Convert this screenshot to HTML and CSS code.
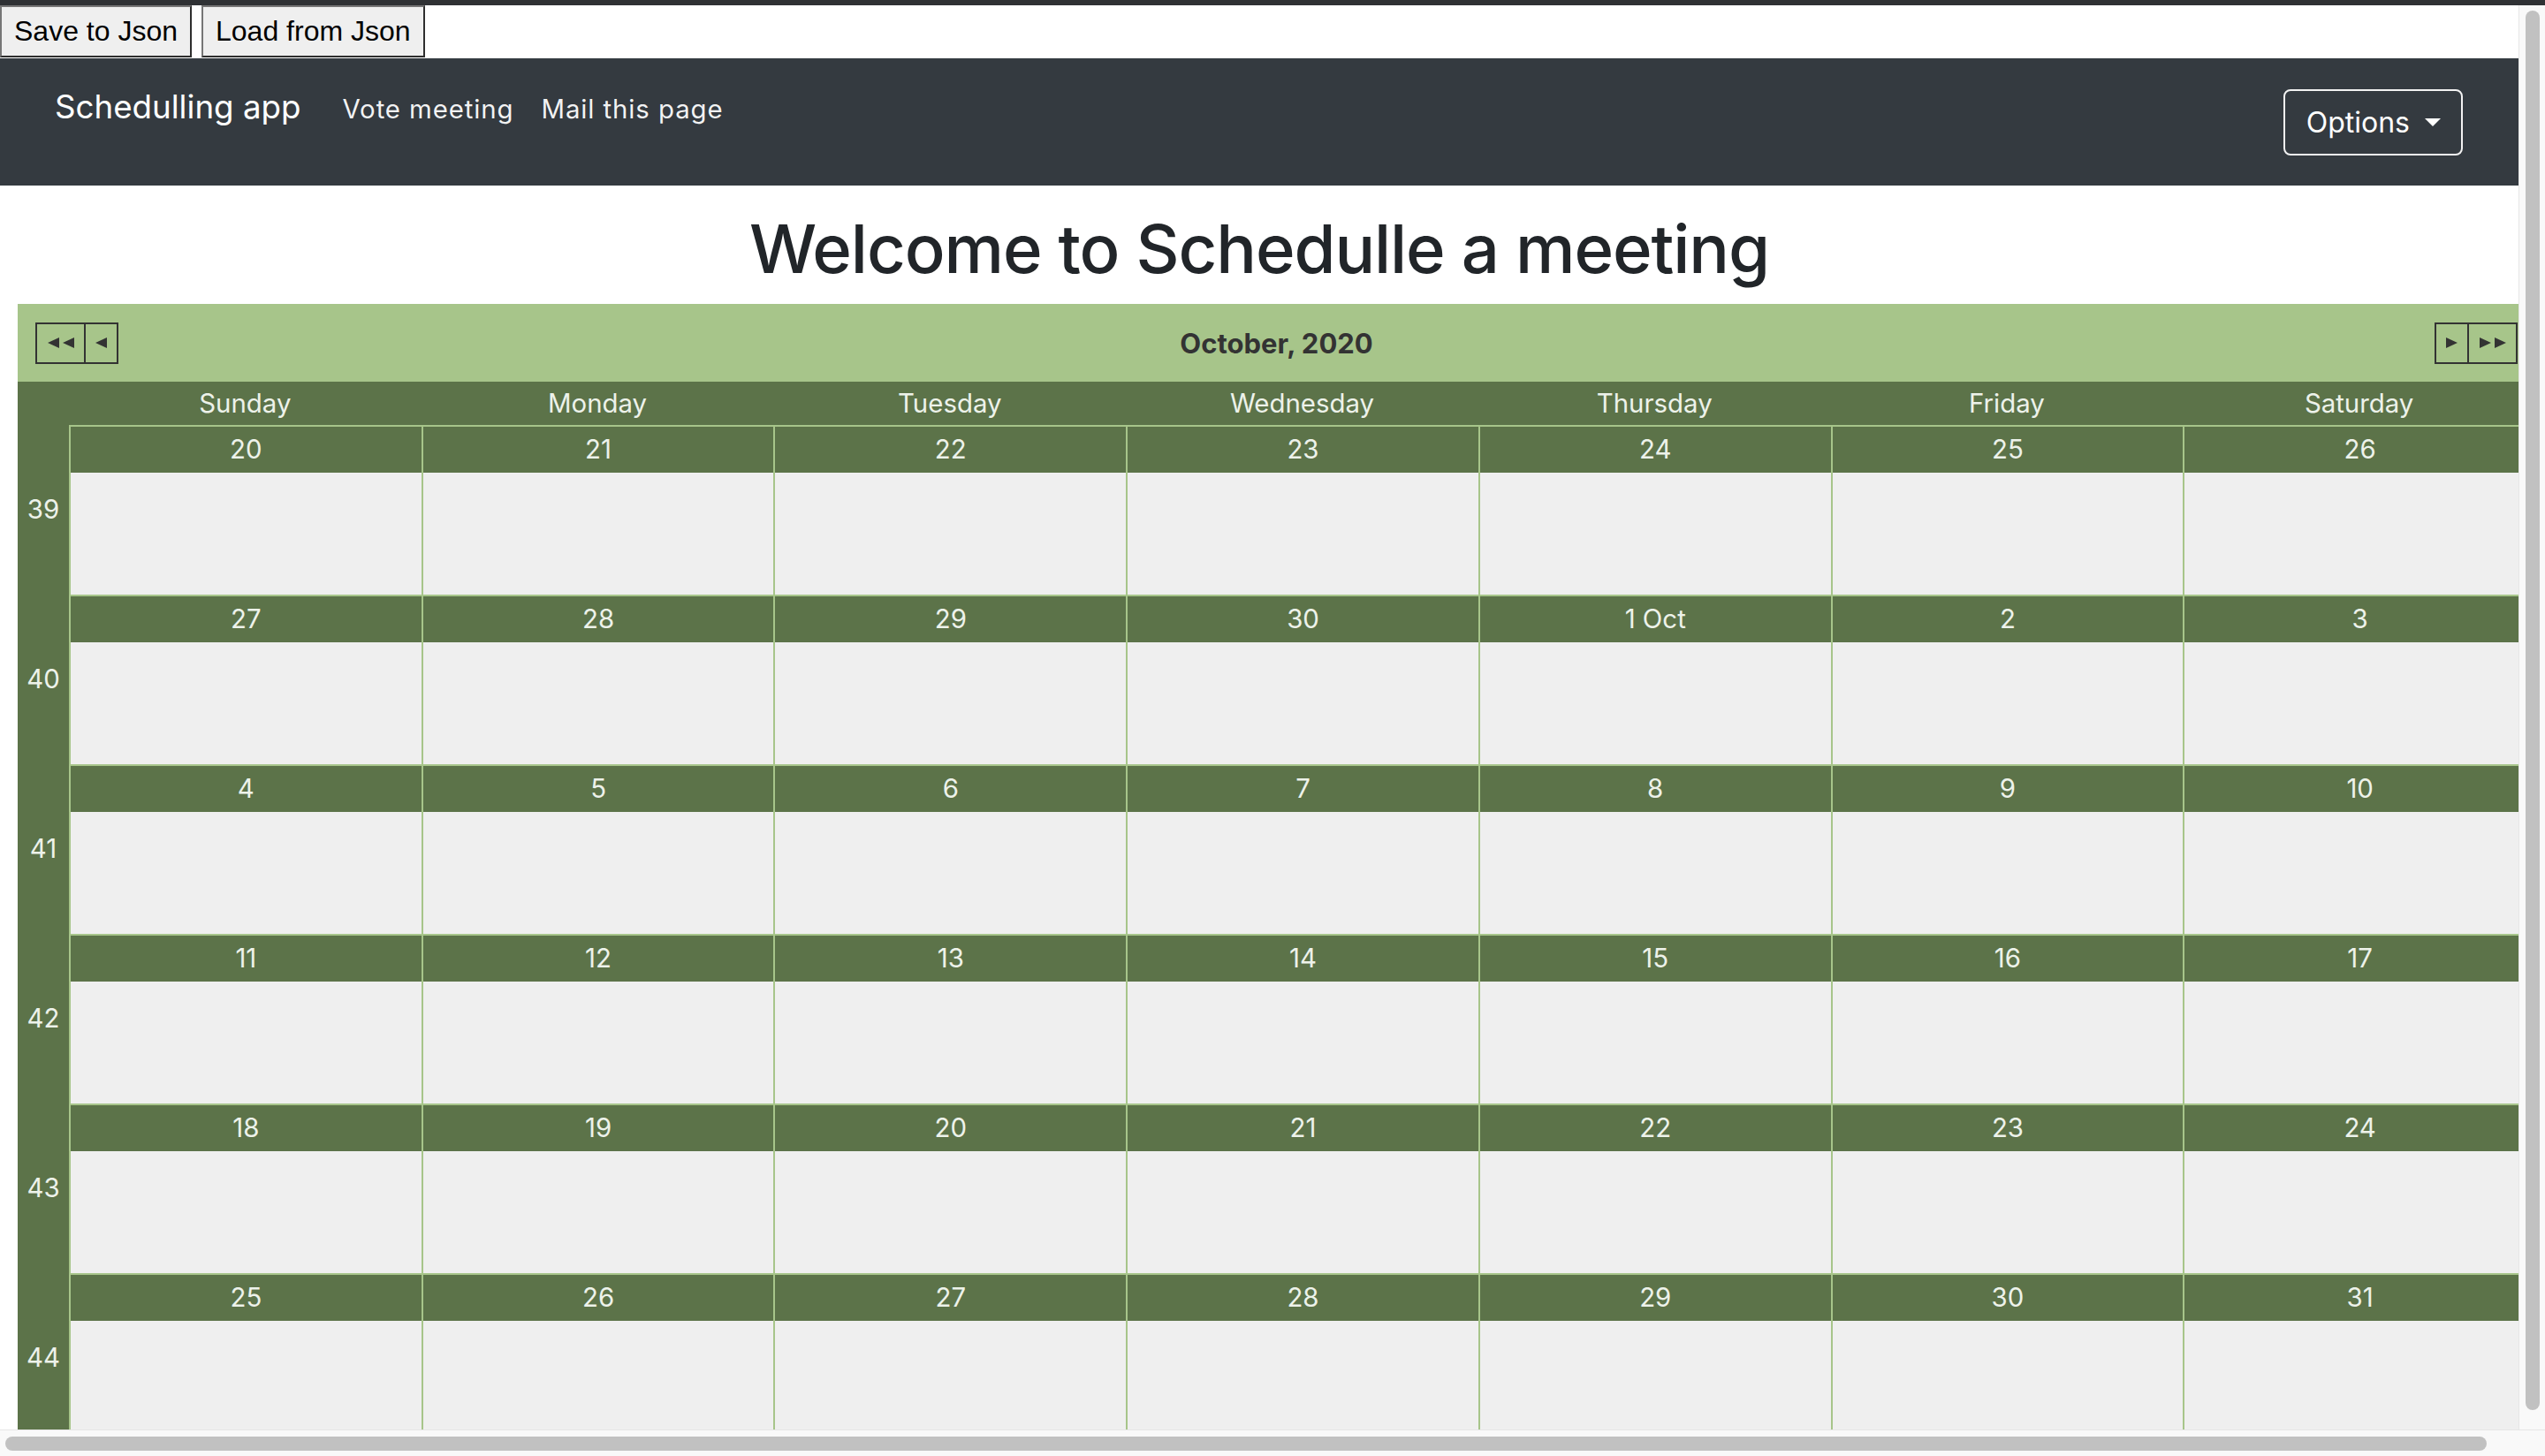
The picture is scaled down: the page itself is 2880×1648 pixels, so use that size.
FILE: index.html
```html
<!DOCTYPE html>
<html lang="en">
<head>
<meta charset="utf-8">
<title>Schedulling app</title>
<link rel="stylesheet" href="styles.css">
</head>
<body>
<div class="chrome"></div>
<div class="window">
  <div class="viewport">
    <div class="page">
      <div class="toolbar">
        <button class="file-btn">Save to Json</button>
        <button class="file-btn">Load from Json</button>
      </div>
      <nav class="navbar">
        <div class="nav-left">
          <a class="brand">Schedulling app</a>
          <div class="nav-links">
            <a class="nav-link">Vote meeting</a>
            <a class="nav-link">Mail this page</a>
          </div>
        </div>
        <button class="options-btn">Options<span class="caret"></span></button>
      </nav>
      <h1 class="page-title">Welcome to Schedulle a meeting</h1>
      <div class="cal">
        <div class="cal-head">
          <div class="navgroup">
            <span class="navbtn wide"><svg width="30" height="12" viewBox="0 0 30 12"><polygon points="0,6 13,0 13,12"/><polygon points="17,6 30,0 30,12"/></svg></span>
            <span class="navbtn narrow"><svg width="13" height="12" viewBox="0 0 13 12"><polygon points="0,6 13,0 13,12"/></svg></span>
          </div>
          <div class="cal-title">October, 2020</div>
          <div class="navgroup right">
            <span class="navbtn narrow"><svg width="13" height="12" viewBox="0 0 13 12"><polygon points="13,6 0,0 0,12"/></svg></span>
            <span class="navbtn wide"><svg width="30" height="12" viewBox="0 0 30 12"><polygon points="13,6 0,0 0,12"/><polygon points="30,6 17,0 17,12"/></svg></span>
          </div>
        </div>
        <div class="days-head">
          <span></span><span>Sunday</span><span>Monday</span><span>Tuesday</span><span>Wednesday</span><span>Thursday</span><span>Friday</span><span>Saturday</span>
        </div>
        <div class="week">
          <div class="wk">39</div>
          <div class="wdays">
            <div class="day"><div class="day-num">20</div><div class="day-body"></div></div>
            <div class="day"><div class="day-num">21</div><div class="day-body"></div></div>
            <div class="day"><div class="day-num">22</div><div class="day-body"></div></div>
            <div class="day"><div class="day-num">23</div><div class="day-body"></div></div>
            <div class="day"><div class="day-num">24</div><div class="day-body"></div></div>
            <div class="day"><div class="day-num">25</div><div class="day-body"></div></div>
            <div class="day"><div class="day-num">26</div><div class="day-body"></div></div>
          </div>
        </div>
        <div class="week">
          <div class="wk">40</div>
          <div class="wdays">
            <div class="day"><div class="day-num">27</div><div class="day-body"></div></div>
            <div class="day"><div class="day-num">28</div><div class="day-body"></div></div>
            <div class="day"><div class="day-num">29</div><div class="day-body"></div></div>
            <div class="day"><div class="day-num">30</div><div class="day-body"></div></div>
            <div class="day"><div class="day-num">1 Oct</div><div class="day-body"></div></div>
            <div class="day"><div class="day-num">2</div><div class="day-body"></div></div>
            <div class="day"><div class="day-num">3</div><div class="day-body"></div></div>
          </div>
        </div>
        <div class="week">
          <div class="wk">41</div>
          <div class="wdays">
            <div class="day"><div class="day-num">4</div><div class="day-body"></div></div>
            <div class="day"><div class="day-num">5</div><div class="day-body"></div></div>
            <div class="day"><div class="day-num">6</div><div class="day-body"></div></div>
            <div class="day"><div class="day-num">7</div><div class="day-body"></div></div>
            <div class="day"><div class="day-num">8</div><div class="day-body"></div></div>
            <div class="day"><div class="day-num">9</div><div class="day-body"></div></div>
            <div class="day"><div class="day-num">10</div><div class="day-body"></div></div>
          </div>
        </div>
        <div class="week">
          <div class="wk">42</div>
          <div class="wdays">
            <div class="day"><div class="day-num">11</div><div class="day-body"></div></div>
            <div class="day"><div class="day-num">12</div><div class="day-body"></div></div>
            <div class="day"><div class="day-num">13</div><div class="day-body"></div></div>
            <div class="day"><div class="day-num">14</div><div class="day-body"></div></div>
            <div class="day"><div class="day-num">15</div><div class="day-body"></div></div>
            <div class="day"><div class="day-num">16</div><div class="day-body"></div></div>
            <div class="day"><div class="day-num">17</div><div class="day-body"></div></div>
          </div>
        </div>
        <div class="week">
          <div class="wk">43</div>
          <div class="wdays">
            <div class="day"><div class="day-num">18</div><div class="day-body"></div></div>
            <div class="day"><div class="day-num">19</div><div class="day-body"></div></div>
            <div class="day"><div class="day-num">20</div><div class="day-body"></div></div>
            <div class="day"><div class="day-num">21</div><div class="day-body"></div></div>
            <div class="day"><div class="day-num">22</div><div class="day-body"></div></div>
            <div class="day"><div class="day-num">23</div><div class="day-body"></div></div>
            <div class="day"><div class="day-num">24</div><div class="day-body"></div></div>
          </div>
        </div>
        <div class="week">
          <div class="wk">44</div>
          <div class="wdays">
            <div class="day"><div class="day-num">25</div><div class="day-body"></div></div>
            <div class="day"><div class="day-num">26</div><div class="day-body"></div></div>
            <div class="day"><div class="day-num">27</div><div class="day-body"></div></div>
            <div class="day"><div class="day-num">28</div><div class="day-body"></div></div>
            <div class="day"><div class="day-num">29</div><div class="day-body"></div></div>
            <div class="day"><div class="day-num">30</div><div class="day-body"></div></div>
            <div class="day"><div class="day-num">31</div><div class="day-body"></div></div>
          </div>
        </div>
      </div>
    </div>
  </div>
  <div class="vscroll"><div class="vthumb"></div></div>
  <div class="hscroll"><div class="hthumb"></div></div>
</div>
</body>
</html>
```
FILE: styles.css
```css
html, body {
  margin: 0;
  padding: 0;
  height: 100%;
}
body {
  display: flex;
  flex-direction: column;
  overflow: hidden;
  font-family: Inter, "Noto Sans", sans-serif;
  background: #ffffff;
  color: #212529;
}
.chrome {
  height: 6px;
  flex: none;
  background: #2f3134;
}
.window {
  flex: 1;
  min-height: 0;
  display: grid;
  grid-template-columns: 1fr 30px;
  grid-template-rows: 1fr 30px;
}
.viewport {
  overflow: hidden;
  min-width: 0;
  min-height: 0;
  background: #ffffff;
}
.page {
  width: 100%;
}

/* file buttons */
.toolbar {
  display: flex;
  gap: 11px;
  height: 60px;
}
.file-btn {
  height: 59px;
  margin: 0;
  padding: 0 14px;
  font-family: "Liberation Sans", Arial, sans-serif;
  font-size: 32px;
  color: #000;
  background: #efefef;
  border-style: solid;
  border-width: 2px;
  border-color: #767676 #2e2e2e #2e2e2e #767676;
  border-radius: 0;
}

/* navbar */
.navbar {
  height: 144px;
  box-sizing: border-box;
  background: #343a40;
  display: flex;
  justify-content: space-between;
  align-items: flex-start;
  padding: 0 63px 0 62px;
}
.nav-left {
  display: flex;
  align-items: baseline;
  margin-top: 27px;
}
.brand {
  font-size: 36.7px;
  line-height: 1.5;
  color: #ffffff;
  margin-right: 47px;
}
.nav-links {
  display: flex;
  gap: 31px;
}
.nav-link {
  font-size: 29.4px;
  line-height: 1.5;
  letter-spacing: 0.9px;
  color: rgba(255, 255, 255, 0.94);
}
.options-btn {
  margin-top: 35px;
  height: 75px;
  box-sizing: border-box;
  padding: 0 23px 0 24px;
  display: inline-flex;
  align-items: center;
  font-family: Inter, "Noto Sans", sans-serif;
  font-size: 32px;
  color: #ffffff;
  background: transparent;
  border: 2px solid #f2f2f2;
  border-radius: 8px;
}
.caret {
  margin-left: 17px;
  width: 0;
  height: 0;
  border-top: 9px solid #ffffff;
  border-left: 9.5px solid transparent;
  border-right: 9.5px solid transparent;
}

/* title */
.page-title {
  margin: 26px 0 17px;
  text-align: center;
  font-size: 76px;
  font-weight: 500;
  line-height: 1.2;
  letter-spacing: -1.1px;
  color: #212529;
}

/* calendar */
.cal {
  margin-left: 20px;
  width: 2849px;
  color: #edf2ea;
  font-size: 29.4px;
}
.cal-head {
  height: 88px;
  box-sizing: border-box;
  background: #a7c58a;
  display: grid;
  grid-template-columns: 1fr auto 1fr;
  align-items: center;
  padding: 0 20px;
}
.navgroup {
  display: flex;
}
.navgroup.right {
  justify-self: end;
}
.navbtn {
  height: 47px;
  box-sizing: border-box;
  border: 2px solid #333333;
  display: flex;
  align-items: center;
  justify-content: center;
}
.navbtn + .navbtn {
  margin-left: -2px;
}
.navbtn.wide {
  width: 57px;
}
.navbtn.narrow {
  width: 39px;
}
.navbtn svg {
  fill: #333333;
}
.cal-title {
  font-weight: 700;
  font-size: 31px;
  color: #333333;
}
.days-head {
  height: 49px;
  background: #5c7349;
  display: grid;
  grid-template-columns: 58px repeat(7, 1fr);
  align-items: center;
  text-align: center;
}
.week {
  display: grid;
  grid-template-columns: 58px 1fr;
}
.wk {
  background: #5c7349;
  display: flex;
  align-items: center;
  justify-content: center;
  padding-bottom: 2px;
}
.wdays {
  display: grid;
  grid-template-columns: repeat(7, 1fr);
}
.day {
  border-left: 2px solid #a7c58a;
  border-top: 2px solid #a7c58a;
}
.day-num {
  height: 52px;
  padding-bottom: 2px;
  box-sizing: border-box;
  background: #5c7349;
  display: flex;
  align-items: center;
  justify-content: center;
}
.day-body {
  height: 138px;
  background: #efefef;
}

/* scrollbars */
.vscroll {
  background: #f9f9f9;
  border-left: 1px solid #e6e6e6;
  padding: 6px 6px 22px 7px;
  display: flex;
}
.vthumb {
  flex: 1;
  background: #c1c1c1;
  border-radius: 8px;
}
.hscroll {
  grid-column: 1 / 3;
  background: #f9f9f9;
  border-top: 1px solid #e6e6e6;
  padding: 7px 66px 6px 6px;
  display: flex;
}
.hthumb {
  flex: 1;
  background: #c1c1c1;
  border-radius: 8px;
}
```
